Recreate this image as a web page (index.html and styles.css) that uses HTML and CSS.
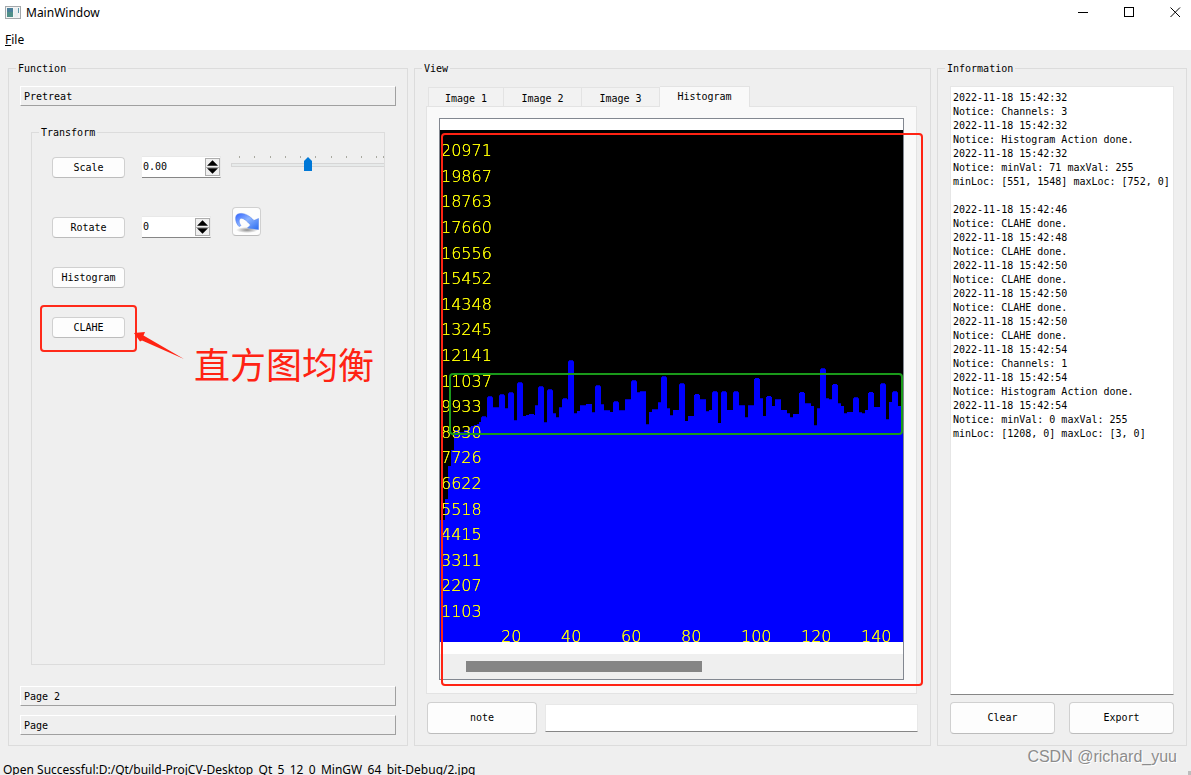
FILE: index.html
```html
<!DOCTYPE html>
<html lang="en">
<head>
<meta charset="utf-8">
<title>MainWindow</title>
<link rel="stylesheet" href="styles.css">
</head>
<body>
<header class="titlebar">
  <svg class="app-icon" width="16" height="14" viewBox="0 0 16 14" aria-hidden="true">
    <rect x="0.5" y="0.5" width="15" height="12" fill="#f4f4f4" stroke="#a3a8ab"/>
    <rect x="2" y="2" width="6" height="9" fill="#4f8f88"/>
    <rect x="2" y="2" width="6" height="4" fill="#4a7f9a"/>
    <rect x="9" y="2" width="4" height="9" fill="#e9eef0"/>
    <rect x="13" y="2" width="1" height="5" fill="#5a96a8"/>
  </svg>
  <h1 class="title">MainWindow</h1>
  <div class="window-buttons">
    <button type="button" aria-label="Minimize"><svg width="11" height="11" viewBox="0 0 11 11"><path d="M0 5.5H10"/></svg></button>
    <button type="button" aria-label="Maximize"><svg width="11" height="11" viewBox="0 0 11 11"><rect x="0.5" y="0.5" width="9" height="9"/></svg></button>
    <button type="button" aria-label="Close"><svg width="11" height="11" viewBox="0 0 11 11"><path d="M0.5 0.5L10 10M10 0.5L0.5 10"/></svg></button>
  </div>
</header>
<nav class="menubar"><button type="button" class="menu"><u>F</u>ile</button></nav>

<main class="workspace">
  <fieldset class="group function">
    <legend>Function</legend>
    <button type="button" class="section">Pretreat</button>
    <fieldset class="group transform">
      <legend>Transform</legend>
      <div class="row row-scale">
        <button type="button" class="btn">Scale</button>
        <div class="spin spin-wide">
          <input type="text" value="0.00" aria-label="Scale factor">
          <div class="steps">
            <button type="button" aria-label="Increase scale"><svg width="10" height="5" viewBox="0 0 10 5"><path d="M0 5L5 0L10 5Z"/></svg></button>
            <button type="button" aria-label="Decrease scale"><svg width="10" height="5" viewBox="0 0 10 5"><path d="M0 0L5 5L10 0Z"/></svg></button>
          </div>
        </div>
        <div class="slider">
          <svg class="ticks" width="160" height="2" viewBox="0 0 160 2" aria-hidden="true"><path d="M8.5 0V2M23.5 0V2M39.5 0V2M54.5 0V2M69.5 0V2M84.5 0V2M100.5 0V2M115.5 0V2M130.5 0V2M145.5 0V2M152.5 0V2"/></svg>
          <input type="range" min="0" max="100" value="48" aria-label="Scale slider">
        </div>
      </div>
      <div class="row">
        <button type="button" class="btn">Rotate</button>
        <div class="spin">
          <input type="text" value="0" aria-label="Rotation angle">
          <div class="steps">
            <button type="button" aria-label="Increase angle"><svg width="10" height="5" viewBox="0 0 10 5"><path d="M0 5L5 0L10 5Z"/></svg></button>
            <button type="button" aria-label="Decrease angle"><svg width="10" height="5" viewBox="0 0 10 5"><path d="M0 0L5 5L10 0Z"/></svg></button>
          </div>
        </div>
        <button type="button" class="tool" aria-label="Rotate image">
          <svg width="26" height="24" viewBox="0 0 26 24">
            <defs>
              <linearGradient id="arc" x1="0" y1="0" x2="1" y2="1"><stop offset="0" stop-color="#2f62ff"/><stop offset="0.45" stop-color="#8db4ff"/><stop offset="1" stop-color="#2a6cf0"/></linearGradient>
              <radialGradient id="shade"><stop offset="0" stop-color="#8c8c8c"/><stop offset="1" stop-color="#fdfdfd"/></radialGradient>
            </defs>
            <ellipse cx="13" cy="21" rx="11" ry="3" fill="url(#shade)"/>
            <path d="M5 17.500C1.500 14 0.500 8 3 5.500C8 2.500 15 6 20 11.500L24.500 9.500V20.500L13.500 19L16.500 16C13 12 9 8.500 6.500 9.500C4.500 11 5 14 7 16.500Z" fill="url(#arc)" stroke="#4a7ae8" stroke-width="0.500"/>
          </svg>
        </button>
      </div>
      <div class="row"><button type="button" class="btn">Histogram</button></div>
      <div class="row marked">
        <button type="button" class="btn">CLAHE</button>
        <div class="mark-box"></div>
        <svg class="mark-arrow" width="52" height="30" viewBox="0 0 52 30" aria-hidden="true"><path d="M1 1L12 0L10.500 3.500L51 27L9 8.500L7 9.500Z"/></svg>
        <p class="mark-text" lang="zh">直方图均衡</p>
      </div>
    </fieldset>
    <button type="button" class="section">Page 2</button>
    <button type="button" class="section last">Page</button>
  </fieldset>

  <fieldset class="group view">
    <legend>View</legend>
    <div class="tabs" role="tablist">
      <button type="button" role="tab" class="tab tab-first">Image 1</button>
      <button type="button" role="tab" class="tab">Image 2</button>
      <button type="button" role="tab" class="tab">Image 3</button>
      <button type="button" role="tab" class="tab selected" aria-selected="true">Histogram</button>
    </div>
    <div class="pane">
      <div class="scroll-area">
        <svg class="chart" width="100%" height="512" role="img" aria-label="Histogram">
          <svg width="463" height="512" viewBox="12 -660 1389 1536">
            <path class="bars" d="M12 876V510H27V447H36V348H45V300H54V240H72V247H84V240H99V232H105V228H114V225H123V222H129V216H135V202H138V199H150V202H153V142H156V139H168V142H171V172H189V136H192V133H204V136H207V175H216V130H219V127H231V130H234V211H243V100H246V97H258V100H261V198H270V195H279V192H294V195H297V166H306V112H309V109H321V112H324V217H333V121H336V118H348V121H351V190H360V202H369V172H378V148H381V145H393V148H396V34H399V31H411V34H414V190H423V183H432V166H450V162H468V187H477V109H480V106H492V109H495V163H504V181H522V186H531V157H534V154H546V157H549V181H567V148H585V94H588V91H600V94H603V127H612V124H630V223H639V186H648V178H666V157H675V82H678V79H690V82H693V175H702V196H711V180H729V103H732V100H744V103H747V213H756V198H774V135H777V132H789V135H792V148H810V184H819V180H828V127H831V124H843V127H846V219H855V127H858V124H870V127H873V180H891V127H894V124H906V127H909V166H927V202H936V166H954V87H957V84H969V87H972V145H981V198H990V141H993V138H1005V141H1008V168H1017V148H1035V180H1053V190H1062V202H1071V192H1089V129H1092V126H1104V129H1107V160H1125V168H1134V226H1143V175H1152V58H1155V55H1167V58H1170V145H1179V148H1188V105H1191V102H1203V105H1206V160H1215V168H1224V190H1233V186H1251V145H1254V142H1266V145H1269V187H1278V190H1287V180H1296V129H1299V126H1311V129H1314V171H1332V103H1335V100H1347V103H1350V208H1359V156H1368V127H1371V124H1383V127H1386V168H1395V202H1401V876Z"/>
          </svg>
          <g class="labels">
            <text x="1" y="26">20971</text><text x="1" y="52">19867</text><text x="1" y="77">18763</text>
            <text x="1" y="103">17660</text><text x="1" y="129">16556</text><text x="1" y="154">15452</text>
            <text x="1" y="180">14348</text><text x="1" y="205">13245</text><text x="1" y="231">12141</text>
            <text x="1" y="257">11037</text><text x="1" y="282">9933</text><text x="1" y="308">8830</text>
            <text x="1" y="333">7726</text><text x="1" y="359">6622</text><text x="1" y="385">5518</text>
            <text x="1" y="410">4415</text><text x="1" y="436">3311</text><text x="1" y="461">2207</text>
            <text x="1" y="487">1103</text>
            <text x="61" y="512">20</text><text x="121" y="512">40</text><text x="181" y="512">60</text>
            <text x="241" y="512">80</text><text x="301" y="512">100</text><text x="361" y="512">120</text>
            <text x="421" y="512">140</text>
          </g>
        </svg>
        <div class="scrollbar"><div class="thumb"></div></div>
        <div class="frame-red"></div>
        <div class="frame-green"></div>
      </div>
    </div>
    <div class="note-row">
      <button type="button" class="btn-large note">note</button>
      <input type="text" class="note-input" aria-label="Note">
    </div>
  </fieldset>

  <fieldset class="group information">
    <legend id="info">Information</legend>
    <textarea class="log" readonly wrap="off" spellcheck="false" aria-labelledby="info">2022-11-18 15:42:32
Notice: Channels: 3
2022-11-18 15:42:32
Notice: Histogram Action done.
2022-11-18 15:42:32
Notice: minVal: 71 maxVal: 255
minLoc: [551, 1548] maxLoc: [752, 0]

2022-11-18 15:42:46
Notice: CLAHE done.
2022-11-18 15:42:48
Notice: CLAHE done.
2022-11-18 15:42:50
Notice: CLAHE done.
2022-11-18 15:42:50
Notice: CLAHE done.
2022-11-18 15:42:50
Notice: CLAHE done.
2022-11-18 15:42:54
Notice: Channels: 1
2022-11-18 15:42:54
Notice: Histogram Action done.
2022-11-18 15:42:54
Notice: minVal: 0 maxVal: 255
minLoc: [1208, 0] maxLoc: [3, 0]</textarea>
    <div class="actions">
      <button type="button" class="btn-large">Clear</button>
      <button type="button" class="btn-large">Export</button>
    </div>
  </fieldset>
</main>

<footer class="statusbar">Open Successful:D:/Qt/build-ProjCV-Desktop_Qt_5_12_0_MinGW_64_bit-Debug/2.jpg</footer>
<div class="watermark">CSDN @richard_yuu</div>
<div class="grip"></div>
</body>
</html>
```
FILE: styles.css
```css
* { box-sizing: border-box; }

body {
  margin: 0;
  height: 100vh;
  display: flex;
  flex-direction: column;
  overflow: hidden;
  position: relative;
  background: #efefef;
  color: #000;
  font: 10px/14px "DejaVu Sans Mono", "Liberation Mono", monospace;
}

button, input, textarea {
  font: inherit;
  color: inherit;
  margin: 0;
  padding: 0;
  border: 0;
  border-radius: 0;
  background: none;
  outline: 0;
}

.titlebar {
  display: flex;
  align-items: center;
  height: 25px;
  padding-left: 5px;
  gap: 5px;
  background: #fff;
}
.title {
  margin: 0;
  flex: 1;
  font: 400 12px/16px "Noto Sans", sans-serif;
}
.window-buttons { display: flex; gap: 14px; }
.window-buttons button { width: 32px; height: 24px; display: grid; place-items: center; }
.window-buttons svg { fill: none; stroke: #000; }

.menubar { height: 25px; padding: 6px 5px 0; background: #fff; }
.menu { font: 12px/18px "Noto Sans", sans-serif; display: block; }

.workspace {
  flex: 1;
  min-height: 0;
  display: grid;
  grid-template-columns: 400fr 517fr 250fr;
  gap: 6px;
  padding: 11px 4px 0 8px;
}

.group {
  min-width: 0;
  margin: 0;
  border: 1px solid #dcdcdc;
  padding: 11px 11px 10px;
  display: flex;
  flex-direction: column;
}
.group > legend { padding: 0 2px; margin-left: -4px; height: 14px; line-height: 16px; }

.section {
  height: 20px;
  padding: 2px 0 0 3px;
  text-align: left;
  border: 1px solid;
  border-color: #fff #a0a0a0 #a0a0a0 #fff;
}
.section.last { margin-top: 9px; }

.transform {
  flex: 1;
  margin: 19px 11px 21px;
  padding: 13px 0 0 20px;
}
.transform > legend { margin-left: -13px; }

.row { display: flex; align-items: center; height: 30px; margin-bottom: 20px; position: relative; }
.row-scale { margin-bottom: 30px; overflow: hidden; }

.btn, .btn-large, .tool {
  background: #fdfdfd;
  border: 1px solid #d0d0d0;
  border-bottom-color: #bcbcbc;
  border-radius: 4px;
}
.btn { width: 73px; height: 21px; flex: none; padding-top: 2px; }
.btn-large { height: 32px; }

.spin {
  display: flex;
  width: 69px;
  height: 22px;
  margin-left: 17px;
  flex: none;
  background: #fff;
  border: 1px solid #e8e8e8;
  border-left: 0;
  border-bottom-color: #868686;
}
.spin-wide { width: 79px; }
.spin input { flex: 1; min-width: 0; padding-left: 1px; }
.steps { width: 15px; display: flex; flex-direction: column; border: 1px solid #adadad; margin: 1px 0; }
.steps button { flex: 1; display: grid; place-items: center; background: #efefef; }
.steps svg { width: 11px; height: 6px; }
.steps button + button { border-top: 1px solid #adadad; }

.slider { width: 160px; flex: none; margin: 0 0 6px 10px; }
.ticks { display: block; stroke: #a9a9a0; }
.slider input { display: block; width: 160px; height: 14px; -webkit-appearance: none; appearance: none; }
.slider input::-webkit-slider-runnable-track {
  height: 4px;
  background: #e7eaea;
  border: 1px solid #d6d6d6;
}
.slider input::-webkit-slider-thumb {
  -webkit-appearance: none;
  width: 8px;
  height: 14px;
  margin-top: -7px;
  background: #0078d7;
  clip-path: polygon(0 4px, 4px 0, 100% 4px, 100% 100%, 0 100%);
}

.tool { width: 29px; height: 29px; margin: 0 0 12px 21px; display: grid; place-items: center; }

.mark-box {
  position: absolute;
  left: -12px;
  top: -7px;
  width: 97px;
  height: 47px;
  border: 2px solid #ff2a1a;
  border-radius: 4px;
}
.mark-arrow { position: absolute; left: 81px; top: 20px; fill: #ff2313; }
.mark-text {
  position: absolute;
  left: 142px;
  top: 29px;
  margin: 0;
  white-space: nowrap;
  color: #ff2313;
  font: 400 36px/44px "Noto Sans CJK SC", sans-serif;
}

.tabs { display: flex; align-items: flex-end; padding-left: 2px; }
.tab {
  width: 78px;
  height: 19px;
  padding-top: 3px;
  background: #f2f2f2;
  border: 1px solid #e3e3e3;
  border-width: 1px 1px 0 0;
}
.tab-first { width: 76px; border-left-width: 1px; }
.tab.selected { width: 90px; height: 21px; padding-top: 0; background: #f9f9f9; z-index: 1; margin-bottom: -1px; }
.view { padding: 11px 12px 11px 11px; }

.pane {
  flex: 1;
  display: flex;
  margin-right: 1px;
  padding: 11px 12px 13px;
  background: #f9f9f9;
  border: 1px solid #e3e3e3;
}
.scroll-area {
  position: relative;
  flex: 1;
  min-width: 0;
  display: flex;
  flex-direction: column;
  justify-content: space-between;
  padding-top: 11px;
  background: #fff;
  border: 1px solid #828790;
}
.chart { display: block; background: #000; overflow: visible; }
.bars { fill: #00f; }
.labels { fill: #ff0; font: 200 16px "DejaVu Sans", sans-serif; filter: drop-shadow(0 0 0 #ff0); }
.scrollbar { height: 25px; background: #efefef; padding: 7px 0 7px 26px; }
.thumb { width: 54%; height: 11px; background: #858585; }
.frame-red {
  position: absolute;
  inset: 14px -20px -7px 1px;
  border: 2px solid #ff2313;
  border-radius: 4px;
}
.frame-green {
  position: absolute;
  inset: 254px 0 auto 9px;
  height: 62px;
  border: 2px solid #1a9a1a;
  border-radius: 4px;
}

.note-row { display: flex; align-items: center; gap: 8px; margin-top: 8px; padding-left: 1px; }
.note { width: 110px; }
.note-input { flex: 1; min-width: 0; height: 28px; padding: 0 4px; background: #fff; border: 1px solid #e8e8e8; border-bottom-color: #868686; }

.information { padding: 11px 12px 11px; }
.information > legend { margin-left: -5px; }
.log {
  flex: 1;
  resize: none;
  overflow: hidden;
  padding: 4px 2px;
  background: #fff;
  border: 1px solid #e6e6e6;
  border-bottom-color: #868686;
}
.actions { display: grid; grid-template-columns: 1fr 1fr; gap: 14px; margin-top: 7px; }

.statusbar {
  height: 29px;
  padding: 15px 3px 0;
  overflow: hidden;
  white-space: nowrap;
  font: 12px/18px "Noto Sans", sans-serif;
}
.watermark {
  position: absolute;
  right: 14px;
  bottom: 8px;
  color: #8c8c8c;
  text-shadow: 1px 1px 0 #fff;
  font: 16px/20px "Liberation Sans", Arial, sans-serif;
}
.grip { position: absolute; right: 0; bottom: 0; width: 3px; height: 4px; background: #bdbdbd; }
```
